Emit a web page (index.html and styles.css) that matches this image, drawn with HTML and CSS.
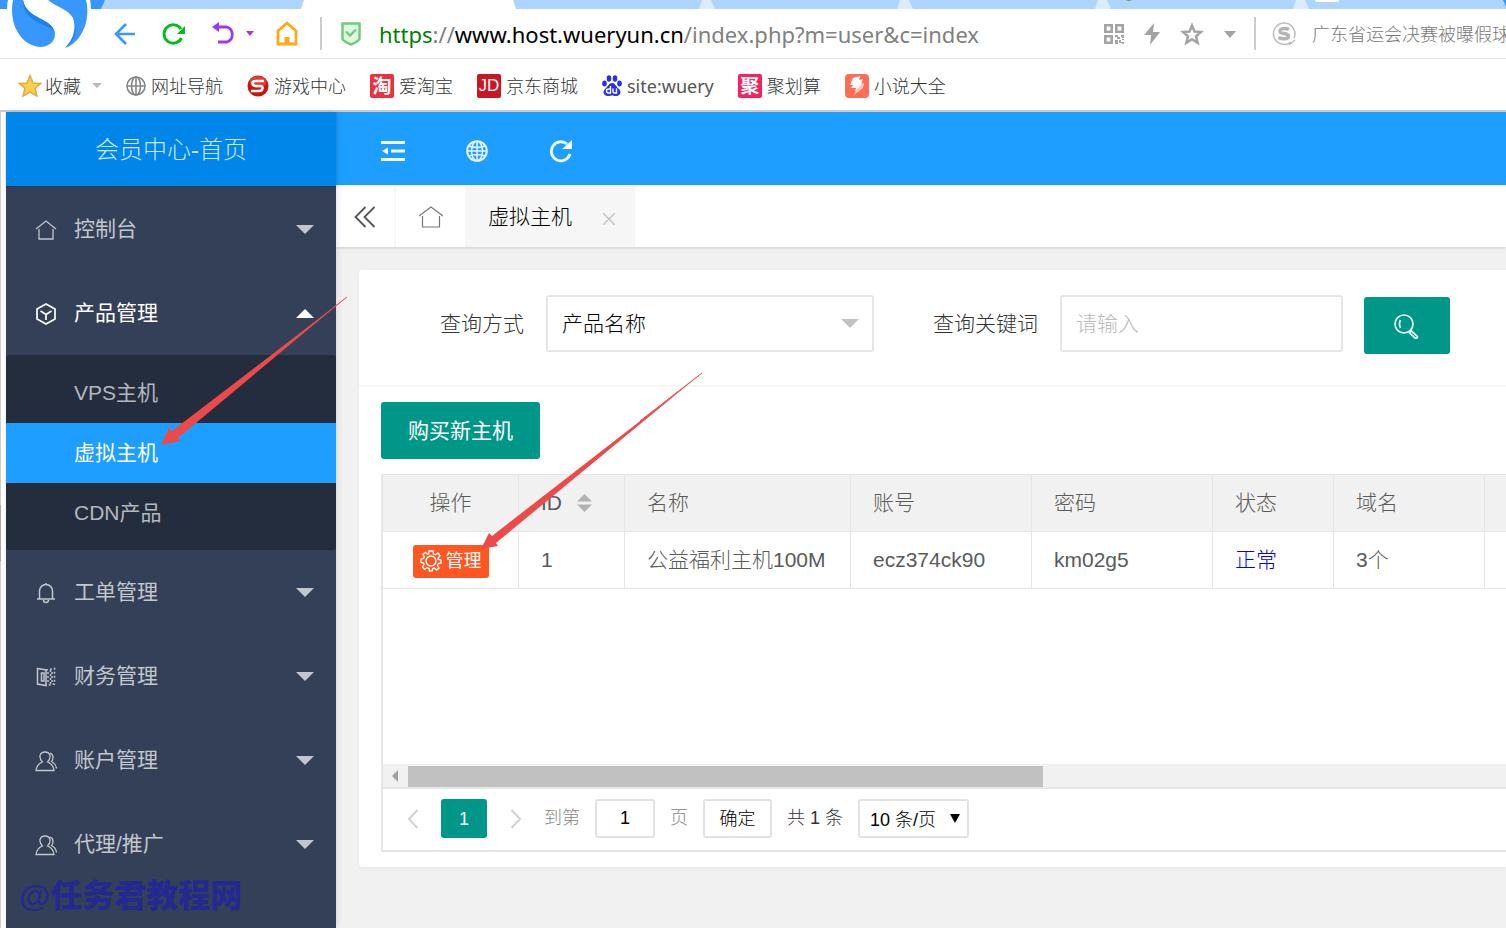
FILE: index.html
```html
<!DOCTYPE html>
<html lang="zh-CN">
<head>
<meta charset="utf-8">
<title>会员中心-首页</title>
<link rel="stylesheet" href="styles.css">
</head>
<body>
<header class="browser">
  <div class="tabstrip">
    <svg width="1506" height="9" viewBox="0 0 1506 9" aria-hidden="true">
      <path fill="#3797fd" d="M0 0H105L101 9H0z"/>
      <path fill="#fff" d="M304 0H513L516 9H301z"/>
      <path fill="#dcecff" d="M702 0H711L715 9H699zM900 0H909L913 9H897zM1098 0H1107L1111 9H1095zM1296 0H1305L1309 9H1293z"/>
      <path fill="#52b36a" d="M1126 0H1132L1130 1H1128z"/>
      <path fill="#fff" d="M1315 0H1339V1H1338V2H1316V1H1315z"/>
      <path fill="#3797fd" d="M1503 0H1506V7z"/>
    </svg>
  </div>
  <svg class="sogou" width="96" height="50" viewBox="0 0 96 50" aria-hidden="true">
    <circle cx="49" cy="9" r="42" fill="#fff"/>
    <path fill="#3797fd" d="M13 0C11 10 12 21 16 29C22 42 33 47 41 47C51 46 55 40 55 34C54 25 47 22 39 18C30 14 24 8 23 0z"/>
    <path fill="#1a83f0" d="M23 0C22 10 29 18 39 23C47 27 53 28 55 34C54 27 49 23 43 20C34 15 25 11 23 0z"/>
    <path fill="#3797fd" d="M48 0H86C89 12 87 26 80 36C76 42 71 46 65 48C73 40 77 28 73 18C68 9 58 8 48 0z"/>
    <path fill="#1a83f0" d="M65 48C75 38 77 28 73 18C78 29 77 39 65 48z"/>
  </svg>
  <div class="addressbar">
    <button class="tool back" aria-label="后退"><svg width="22" height="24" viewBox="0 0 22 24"><path d="M12 2L2 12L12 22M2 12H21" fill="none" stroke="#3797fd" stroke-width="2.6"/></svg></button>
    <button class="tool reload" aria-label="刷新"><svg width="26" height="24" viewBox="0 0 26 24"><path d="M20.500 16A9.200 9.200 0 1 1 20 7" fill="none" stroke="#00bd1e" stroke-width="2.900"/><path d="M16 12H24V4z" fill="#00bd1e"/></svg></button>
    <button class="tool undo" aria-label="撤销"><svg width="42" height="24" viewBox="0 0 42 24"><path d="M5 5H15A8 8 0 0 1 15 20H6" fill="none" stroke="#9c39f5" stroke-width="2.8"/><path d="M0 5L7 0V10zM34 9H42L38 14z" fill="#9c39f5"/></svg></button>
    <button class="tool home" aria-label="主页"><svg width="22" height="26" viewBox="0 0 22 26"><path d="M2 23V10L11 2L20 10V23z" fill="none" stroke="#ffa818" stroke-width="2.8"/><path d="M8.500 16H13.500V23H8.500z" fill="#ffa818"/></svg></button>
    <i class="bar"></i>
    <svg class="shield" width="22" height="24" viewBox="0 0 22 24" aria-hidden="true"><path d="M2.500 1.500H19.500V17Q19 19 11 22.500Q3 19 2.500 17z" fill="#dcfbe0" stroke="#72ca7e" stroke-width="2.500"/><path d="M6 9.500L10 13.500L16 7.500" fill="none" stroke="#72ca7e" stroke-width="2.300"/></svg>
    <p class="url"><span class="scheme">https</span><span>://</span><b>www.host.wueryun.cn</b><span>/index.php?m=user&amp;c=index</span></p>
    <div class="tools-right">
      <svg width="20" height="20" viewBox="0 0 20 20" aria-hidden="true"><g fill="none" stroke="#a3a3a3" stroke-width="2.600"><path d="M1.300 1.300H7.700V7.700H1.300zM12.300 1.300H18.700V7.700H12.300zM1.300 12.300H7.700V18.700H1.300z"/></g><path fill="#a3a3a3" d="M11 11h3v2h2v2h-3v-2h-2zM17 11h3v3h-2v-1h-1zM11 16h3v4h-3zM15 16h2v2h3v2h-2v-1h-3zM18 15h2v1h-2z"/></svg>
      <svg width="16" height="22" viewBox="0 0 16 22" aria-hidden="true"><path fill="#a3a3a3" d="M10 0L0 12H7L6 22L16 9H9z"/></svg>
      <svg width="24" height="22" viewBox="0 0 24 22" aria-hidden="true"><path fill="none" stroke="#a3a3a3" stroke-width="2.500" d="M12 2.500L14.500 8.500L21 9L16 13.300L17.700 19.800L12 16.300L6.300 19.800L8 13.300L3 9L9.500 8.500z"/></svg>
      <svg width="12" height="8" viewBox="0 0 12 8" aria-hidden="true"><path fill="#a3a3a3" d="M0 1H12L6 8z"/></svg>
    </div>
    <i class="bar"></i>
    <svg class="engine" width="24" height="24" viewBox="0 0 24 24" aria-hidden="true"><path d="M19 20A10.700 10.700 0 1 1 22 16M17 23L23 18" fill="none" stroke="#bdbdbd" stroke-width="1.500"/><path d="M17 7.500C14 6 7.500 6 8 9.500C8.500 12.500 16 10.500 16.500 14C17 17.500 10 17.500 6.500 15.500" fill="none" stroke="#b4b4b4" stroke-width="3.500"/></svg>
    <p class="news">广东省运会决赛被曝假球</p>
  </div>
  <nav class="bookmarks">
    <a href="#" class="fav"><svg width="24" height="24" viewBox="0 0 24 24"><path d="M12 1.500L15 9L22.500 9.500L17 14.500L19 22L12 18L5 22L7 14.500L1.500 9.500L9 9z" fill="#f8d04a" stroke="#e6a847" stroke-width="1.500"/></svg>收藏<svg class="caret" width="10" height="6" viewBox="0 0 10 6"><path d="M0 0H10L5 5z" fill="#bbb"/></svg></a>
    <a href="#" class="nav"><svg width="20" height="20" viewBox="0 0 20 20"><g fill="none" stroke="#858585" stroke-width="1.600"><circle cx="10" cy="10" r="9"/><ellipse cx="10" cy="10" rx="4.500" ry="9"/><path d="M10 1V19M1 10H19"/></g></svg>网址导航</a>
    <a href="#" class="game"><svg width="22" height="22" viewBox="0 0 22 22"><circle cx="11" cy="11" r="10.500" fill="#c8160c"/><ellipse cx="11" cy="7" rx="8.500" ry="6" fill="#e9392b"/><path d="M17 6H9Q5 6 5.500 8.500Q6 11 9 11H13Q16 11 15.500 13.500Q15 16 12 16H4" fill="none" stroke="#fff" stroke-width="2.500"/></svg>游戏中心</a>
    <a href="#" class="tao"><span class="badge red">淘</span>爱淘宝</a>
    <a href="#" class="jd"><span class="badge jdred">JD</span>京东商城</a>
    <a href="#" class="du"><svg width="20" height="22" viewBox="0 0 20 22"><g fill="#2932e1"><ellipse cx="2.500" cy="8.500" rx="2.300" ry="3" /><ellipse cx="7" cy="3.500" rx="2.300" ry="3.200"/><ellipse cx="13" cy="3.500" rx="2.300" ry="3.200"/><ellipse cx="17.500" cy="8.500" rx="2.300" ry="3"/><path d="M10 8C13 8 13.500 11 17 14C20 17 18 21 14.500 21C12 21 11 20.500 10 20.500C9 20.500 8 21 5.500 21C2 21 0 17 3 14C6.500 11 7 8 10 8z"/></g><path d="M8.500 11V18H6.500A1.800 1.800 0 0 1 6.500 14H8.500M11 13.500V16.500Q11 18 12.500 18H14.500V13.500" fill="none" stroke="#fff" stroke-width="1.400"/></svg>site:wuery</a>
    <a href="#" class="ju"><span class="badge pink">聚</span>聚划算</a>
    <a href="#" class="novel"><svg width="24" height="24" viewBox="0 0 24 24"><rect width="24" height="24" rx="4" fill="#ff6d57"/><path fill="#ffc5bb" d="M15 10L19 9L18 14L9 21L11 16z"/><path fill="#fff" d="M8 4L15 2L14 6L18 5L16 11L10 17L11 14H6L8 11H5z"/></svg>小说大全</a>
  </nav>
</header>

<div class="app">
  <div class="edge"><i></i></div>
  <aside class="sidebar">
    <a class="brand" href="#">会员中心-首页</a>
    <nav class="menu">
      <a href="#" class="item"><svg class="ico" width="22" height="22" viewBox="0 0 22 22"><path d="M1 10L11 2L21 10M4 10V20H18V10" /></svg><span>控制台</span><i class="arrow"></i></a>
      <a href="#" class="item open"><svg class="ico" width="22" height="22" viewBox="0 0 22 22"><path stroke-width="1.700" d="M11 1L20 6V16L11 21L2 16V6zM5.500 8L11 11.500L16.500 8M11 11.500V17" /></svg><span>产品管理</span><i class="arrow up"></i></a>
      <div class="sub">
        <a href="#">VPS主机</a>
        <a href="#" class="current">虚拟主机</a>
        <a href="#">CDN产品</a>
      </div>
      <a href="#" class="item"><svg class="ico" width="22" height="22" viewBox="0 0 22 22"><path stroke-width="1.500" d="M2 17H20M4.500 17V9A6.500 6.500 0 0 1 17.500 9V17M8.500 18A2.500 2.500 0 0 0 13.500 18M11 1V3" /></svg><span>工单管理</span><i class="arrow"></i></a>
      <a href="#" class="item"><svg class="ico" width="22" height="22" viewBox="0 0 22 22"><path stroke-width="1.500" d="M2.500 2.500L11 4V19.500L2.500 18zM6.500 7H9V15H6.500z"/><path stroke-width="1.500" stroke-dasharray="2 2" d="M11 4L19.500 2.500V18L11 19.500M15.500 4V18M12 11H20M12 7H20M12 15H20"/></svg><span>财务管理</span><i class="arrow"></i></a>
      <a href="#" class="item"><svg class="ico" width="22" height="22" viewBox="0 0 22 22"><path d="M7.500 12Q4.500 9 5 5.500Q6 2 10 2Q14 2 15 5.500Q15.500 9 12.500 12Q18 14 19 20.500H1Q2 14 7.500 12zM15 3Q18 4 18 7.500Q18 10 16.500 11.500Q21 14 21.500 18.500"/></svg><span>账户管理</span><i class="arrow"></i></a>
      <a href="#" class="item"><svg class="ico" width="22" height="22" viewBox="0 0 22 22"><path d="M7.500 12Q4.500 9 5 5.500Q6 2 10 2Q14 2 15 5.500Q15.500 9 12.500 12Q18 14 19 20.500H1Q2 14 7.500 12zM15 3Q18 4 18 7.500Q18 10 16.500 11.500Q21 14 21.500 18.500"/></svg><span>代理/推广</span><i class="arrow"></i></a>
    </nav>
    <p class="watermark">@任务君教程网</p>
  </aside>

  <main class="main">
    <div class="topbar">
      <button aria-label="收起菜单"><svg width="24" height="20" viewBox="0 0 24 20"><path fill="#f4faff" d="M0 0H24V3H0zM10 8.500H24V11.500H10zM0 17H24V20H0zM1 10L7 6.500V13.500z"/></svg></button>
      <button aria-label="前台"><svg width="22" height="22" viewBox="0 0 22 22"><g fill="none" stroke="#e6f4ff" stroke-width="1.500"><circle cx="11" cy="11" r="9.800" stroke-width="2"/><ellipse cx="11" cy="11" rx="5.500" ry="9.800"/><path d="M11 1V21M1 11H21M3 6Q11 9 19 6M3 16Q11 13 19 16"/></g></svg></button>
      <button aria-label="刷新"><svg width="24" height="24" viewBox="0 0 24 24"><path d="M21 15A9.500 9.500 0 1 1 18 5" fill="none" stroke="#f4faff" stroke-width="2.800"/><path fill="#f4faff" d="M23 1V10H13z"/></svg></button>
    </div>
    <div class="pagetabs">
      <button class="prev" aria-label="向左滚动"><svg width="22" height="22" viewBox="0 0 22 22"><path d="M11.500 1L1.500 11L11.500 21M20.500 1L10.500 11L20.500 21" fill="none" stroke="#555" stroke-width="1.800"/></svg></button>
      <a href="#" class="tabhome" aria-label="首页"><svg width="24" height="22" viewBox="0 0 24 22"><path d="M0 10L12 1L24 10M3.500 10V21H20.500V10" fill="none" stroke="#777" stroke-width="1.200"/></svg></a>
      <div class="tab"><a href="#">虚拟主机</a><button aria-label="关闭"><svg width="12" height="12" viewBox="0 0 12 12"><path d="M0 0L12 12M12 0L0 12" stroke="#c4c4c4" stroke-width="1.400"/></svg></button></div>
    </div>
    <section class="card">
      <form class="search">
        <label for="mode">查询方式</label>
        <div class="pick mode"><select id="mode"><option>产品名称</option></select><i></i></div>
        <label for="kw">查询关键词</label>
        <input id="kw" type="text" placeholder="请输入">
        <button type="button" aria-label="搜索"><svg width="26" height="26" viewBox="0 0 26 26"><g fill="none" stroke="#e6f7f4" stroke-width="1.700"><circle cx="10" cy="11" r="9"/><path d="M6.500 7Q4.500 11 6.500 15M15.500 20L17.500 18L23.500 23.500Q23.500 26 21 25z"/></g></svg></button>
      </form>
      <div class="body">
        <button class="buy" type="button">购买新主机</button>
        <div class="grid">
          <div class="viewport">
            <table>
              <colgroup><col class="c1"><col class="c2"><col class="c3"><col class="c4"><col class="c4"><col class="c5"><col class="c6"><col class="c4"></colgroup>
              <thead><tr><th class="mid">操作</th><th><span class="sortable">ID<svg width="15" height="18" viewBox="0 0 15 18"><path fill="#b2b2b2" d="M0 7.500L7.500 0L15 7.500zM0 10.500H15L7.500 18z"/></svg></span></th><th>名称</th><th>账号</th><th>密码</th><th>状态</th><th>域名</th><th></th></tr></thead>
              <tbody><tr><td class="mid"><a href="#" class="manage"><svg width="22" height="22" viewBox="0 0 22 22"><g fill="none" stroke="#fff" stroke-width="1.400"><circle cx="11" cy="11" r="5"/><path d="M9 1H13L13.500 4L15.500 4.800L18 3L20 6L18 8.200L18.500 9.500L21 10V13L18.300 13.500L17.500 15.500L19 18L16.500 20L14.300 18L12.800 18.500L12 21H9.500L9 18.500L7 17.700L4.500 19.300L2.500 17L4 14.500L3.500 13L1 12.500V9L3.500 8.500L4.300 6.700L3 4.500L5.500 2.500L7.500 4.200L8.700 3.700z"/></g></svg>管理</a></td><td>1</td><td>公益福利主机100M</td><td>ecz374ck90</td><td>km02g5</td><td class="ok">正常</td><td>3个</td><td></td></tr></tbody>
            </table>
          </div>
          <div class="scroll"><svg width="25" height="23" viewBox="0 0 25 23" aria-hidden="true"><path fill="#a0a0a0" d="M9 12L15 6V18z"/></svg><i></i></div>
          <div class="pager">
            <button class="step" aria-label="上一页"><svg width="12" height="20" viewBox="0 0 12 20"><path d="M10.500 1L2 10L10.500 19" fill="none" stroke="#d2d2d2" stroke-width="2"/></svg></button>
            <button class="now">1</button>
            <button class="step" aria-label="下一页"><svg width="12" height="20" viewBox="0 0 12 20"><path d="M1.500 1L10 10L1.500 19" fill="none" stroke="#d2d2d2" stroke-width="2"/></svg></button>
            <label for="pg">到第</label>
            <input id="pg" type="text" value="1">
            <label for="pg">页</label>
            <button class="go">确定</button>
            <span class="total">共 1 条</span>
            <div class="pick size"><select aria-label="每页条数"><option>10 条/页</option></select><i></i></div>
          </div>
        </div>
      </div>
    </section>
  </main>
</div>
<svg class="marks" width="720" height="560" viewBox="0 0 720 560" aria-hidden="true">
  <path fill="#ec4a49" d="M161 445L169 428L172 431L347 297L178 438L180 441zM481 549L489 533L492 536L702 373L496 543L498 546z"/>
  <path fill="none" stroke="#ec4a49" d="M300 334L347 297M640 421L702 373"/>
</svg>
</body>
</html>
```
FILE: styles.css
```css
* { box-sizing: border-box; }
body {
  margin: 0;
  height: 100vh;
  display: flex;
  flex-direction: column;
  overflow: hidden;
  position: relative;
  background: #fff;
  color: #333;
  font: 300 21px/30px "Liberation Sans", "Noto Sans CJK SC", sans-serif;
}
p { margin: 0; }
a { color: inherit; text-decoration: none; }
svg { display: block; flex: none; }
button, input, select { font: inherit; color: inherit; margin: 0; }
button { border: 0; background: none; padding: 0; display: flex; align-items: center; justify-content: center; }

/* browser chrome */
.browser { position: relative; flex: none; border-bottom: 2px solid #ccc; }
.tabstrip { height: 9px; background: #aed5ff; overflow: hidden; }
.sogou { position: absolute; left: 0; top: 0; }
.addressbar {
  height: 50px;
  display: flex;
  align-items: center;
  padding-left: 114px;
  border-bottom: 1px solid #e6e6e6;
  overflow: hidden;
  white-space: nowrap;
}
.reload { margin-left: 25px; }
.undo { margin-left: 25px; }
.home { margin-left: 22px; }
.bar { flex: none; width: 2px; height: 33px; background: #ccc; }
.home + .bar { margin-left: 22px; }
.shield { margin: 0 17px 0 18px; }
.url { flex: 1; font-family: "Noto Sans", sans-serif; font-size: 22px; font-weight: 400; color: #808080; }
.url b { font-weight: 400; color: #000; }
.url .scheme { color: #008000; }
.tools-right { display: flex; align-items: center; gap: 20px; margin-right: 18px; }
.engine { margin: 0 16px; }
.news { width: 194px; padding-top: 3px; overflow: hidden; font-size: 18px; color: #777; }
.bookmarks {
  height: 51px;
  display: flex;
  align-items: center;
  gap: 24px;
  padding: 2px 0 0 18px;
  font: 300 18px/30px "Noto Sans", "Noto Sans CJK SC", sans-serif;
  color: #333;
  white-space: nowrap;
}
.bookmarks a { display: flex; align-items: center; gap: 5px; }
.bookmarks .fav { gap: 3px; }
.bookmarks .du { font-weight: 400; color: #555; }
.caret { margin-left: 8px; }
.badge { width: 24px; height: 24px; border-radius: 2px; color: #fff; font-size: 19px; font-weight: 700; line-height: 24px; text-align: center; }
.badge.red { background: #e8323c; }
.badge.jdred { background: #c81623; font: 400 17px/24px "Liberation Sans", sans-serif; }
.badge.pink { background: #f5225e; }

/* application */
.app { flex: 1; min-height: 0; display: flex; }
.edge { flex: none; width: 6px; border-left: 1px solid #ccc; padding-top: 393px; }
.edge i { display: block; width: 1px; height: 56px; margin-left: -1px; background: #a6a6a6; }
.sidebar {
  flex: none;
  width: 330px;
  position: relative;
  z-index: 1;
  background: #344058;
  color: #c2c6cd;
  font-weight: 400;
  box-shadow: 1px 0 6px rgba(0, 0, 0, .12);
}
.brand {
  display: block;
  height: 74px;
  line-height: 76px;
  background: #0085e8;
  color: #cce7fa;
  font-size: 24px;
  font-weight: 300;
  text-align: center;
  box-shadow: 0 1px 2px rgba(0, 0, 0, .15);
}
.menu { padding-top: 1px; }
.item { height: 84px; display: flex; align-items: center; padding: 0 22px 0 29px; }
.item span { flex: 1; margin-left: 17px; }
.ico { height: 24px; padding-top: 2px; fill: none; stroke: currentColor; stroke-width: 1.3; }
.arrow { border: 9px solid transparent; border-top-color: #c2c6cd; border-bottom: 0; }
.arrow.up { border-top: 0; border-bottom: 9px solid #fff; }
.open { color: #fff; }
.sub { padding: 8px 0 7px; border-radius: 3px; background: #242d3e; color: #b4b7bd; }
.sub a { display: block; height: 60px; line-height: 60px; padding-left: 68px; }
.sub .current { background: #1e9fff; color: #fff; }
.watermark { padding-left: 13px; margin-top: -5px; font-size: 32px; font-weight: 900; color: #24298f; }

.main { flex: 1; min-width: 0; overflow: hidden; background: #f1f1f1; }
.topbar { height: 73px; padding: 5px 0 0 15px; background: #1e9fff; display: flex; }
.topbar button { width: 84px; }
.pagetabs { height: 62px; display: flex; background: #fff; border-top: 2px solid #f6f6f6; box-shadow: 0 1px 3px rgba(0, 0, 0, .15); color: #000; }
.prev { width: 60px; border-right: 2px solid #f6f6f6; }
.tabhome { width: 69px; display: flex; align-items: center; justify-content: center; }
.tab { width: 170px; display: flex; align-items: center; justify-content: space-between; padding: 0 20px 0 23px; background: #f6f6f6; }
.tab button { padding-top: 4px; }

.card { margin: 23px 0 0 23px; background: #fff; border-radius: 3px 0 0 3px; box-shadow: 0 1px 3px rgba(0, 0, 0, .06); }
.search { height: 117px; display: flex; align-items: flex-start; padding: 25px 56px 0 81px; border-bottom: 2px solid #f6f6f6; }
.search label { line-height: 57px; white-space: nowrap; }
.search input, .search select { height: 57px; border: 2px solid #e6e6e6; border-radius: 3px; background: #fff; padding: 0 14px; color: #000; }
.search input { flex: 1; min-width: 0; margin: 0 21px 0 22px; }
.search input::placeholder { color: #bbb; }
.search button { width: 86px; height: 57px; margin-top: 2px; border-radius: 3px; background: #009688; }
.pick { display: grid; align-items: center; }
.pick > * { grid-area: 1 / 1; }
.pick select { appearance: none; width: 100%; }
.pick i { justify-self: end; pointer-events: none; }
.mode { width: 328px; margin: 0 59px 0 22px; }
.mode i { margin-right: 15px; border: 9px solid transparent; border-top-color: #c2c2c2; border-bottom: 0; }

.body { padding: 15px 0 15px 22px; }
.buy { width: 159px; height: 57px; border-radius: 3px; background: #009688; color: #fff; font-weight: 400; }
.grid { margin-top: 15px; border: 2px solid #e6e6e6; border-right: 0; border-top-width: 1px; color: #666; }
.viewport { height: 289px; overflow: hidden; }
table { width: 1283px; table-layout: fixed; border-collapse: separate; border-spacing: 0; color: #5a5a5a; }
.c1 { width: 136px; }
.c2 { width: 106px; }
.c3 { width: 226px; }
.c4 { width: 181px; }
.c5 { width: 121px; }
.c6 { width: 151px; }
th, td { height: 57px; padding: 0 22px; border: solid #e6e6e6; border-width: 0 1px 1px 0; text-align: left; font-weight: 300; white-space: nowrap; }
th { background: #f1f1f1; }
.mid { padding: 0 20px; text-align: center; }
.sortable { display: flex; align-items: center; gap: 15px; }
.ok { color: #00f; }
.manage { display: inline-flex; align-items: center; gap: 4px; height: 33px; padding: 0 7px; margin-top: 5px; border-radius: 3px; background: #ff5722; color: #fff; font-size: 18px; font-weight: 400; }
.scroll { height: 23px; background: #f1f1f1; display: flex; }
.scroll i { width: 635px; margin-top: 2px; background: #c1c1c1; }
.pager { height: 63px; display: flex; align-items: flex-start; padding: 10px 0 0 24px; border-top: 2px solid #e6e6e6; font-size: 18px; white-space: nowrap; }
.pager > * { height: 39px; line-height: 38px; }
.step { width: 12px; }
.now { width: 46px; margin: 0 23px 0 22px; border-radius: 3px; background: #009688; color: #fff; }
.pager label { color: #888; }
.step + label { margin-left: 22px; }
.pager input { width: 60px; margin: 0 15px; text-align: center; padding: 0; }
.pager input, .go, .pager select { border: 2px solid #e2e2e2; border-radius: 3px; background: #fff; color: #000; }
.go { width: 69px; margin: 0 15px; }
.total { color: #333; }
.size { width: 111px; margin-left: 15px; }
.size select { height: 39px; padding: 0 10px; }
.size i { margin-right: 9px; border: 5px solid transparent; border-top: 9px solid #000; border-bottom: 0; }

.marks { position: absolute; left: 0; top: 0; z-index: 2; pointer-events: none; }
```
